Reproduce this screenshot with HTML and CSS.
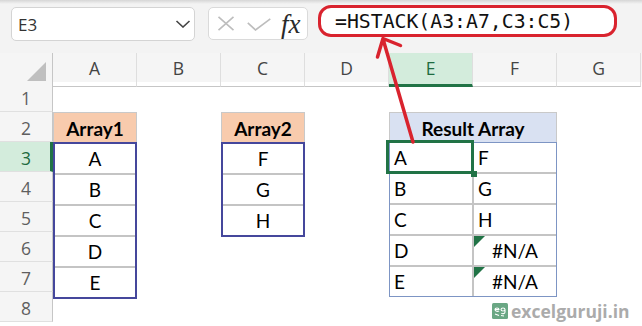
FILE: index.html
```html
<!DOCTYPE html>
<html>
<head>
<meta charset="utf-8">
<link rel="stylesheet" href="styles.css">
</head>
<body>
<div class="app">
  <div class="topbar">
    <div class="namebox">
      <span>E3</span>
      <svg class="chev" width="16" height="8" viewBox="0 0 16 8"><path d="M1.5 1 L8 7 L14.5 1" fill="none" stroke="#444" stroke-width="1.6"/></svg>
    </div>
    <div class="fxbtns">
      <svg width="18" height="15" viewBox="0 0 18 15"><path d="M1.5 0.8 L16.5 14.2 M16.5 0.8 L1.5 14.2" fill="none" stroke="#bdbdbd" stroke-width="1.6"/></svg>
      <svg class="check" width="24" height="13" viewBox="0 0 24 13"><path d="M0.8 4.8 L8.5 12 L23.3 0.8" fill="none" stroke="#bdbdbd" stroke-width="1.6"/></svg>
      <span class="fx">fx</span>
    </div>
    <div class="formula">=HSTACK(A3:A7,C3:C5)</div>
  </div>

  <div class="colheads">
    <div class="corner"><svg width="19" height="19" viewBox="0 0 19 19"><path d="M0 19 L19 0 L19 19 Z" fill="#bfbfbf"/></svg></div>
    <div class="ch">A</div>
    <div class="ch">B</div>
    <div class="ch">C</div>
    <div class="ch">D</div>
    <div class="ch sel">E</div>
    <div class="ch">F</div>
    <div class="ch">G</div>
  </div>

  <div class="body">
    <div class="rowheads">
      <div class="rh">1</div>
      <div class="rh">2</div>
      <div class="rh sel">3</div>
      <div class="rh">4</div>
      <div class="rh">5</div>
      <div class="rh">6</div>
      <div class="rh">7</div>
      <div class="rh">8</div>
    </div>
    <div class="cells">
      <div class="block arr1">
        <div class="thead peach">Array1</div>
        <div class="range">
          <div>A</div><div>B</div><div>C</div><div>D</div><div>E</div>
        </div>
      </div>
      <div class="block arr2">
        <div class="thead peach">Array2</div>
        <div class="range">
          <div>F</div><div>G</div><div>H</div>
        </div>
      </div>
      <div class="block res">
        <div class="thead bluehead">Result Array</div>
        <div class="range rgrid">
          <div>A</div><div>F</div>
          <div>B</div><div>G</div>
          <div>C</div><div>H</div>
          <div>D</div><div class="err">#N/A</div>
          <div>E</div><div class="err">#N/A</div>
        </div>
      </div>
      <div class="selbox"></div>
      <div class="handle"></div>
    </div>
  </div>

  <svg class="arrow" width="642" height="326" viewBox="0 0 642 326">
    <path d="M413 142 L383 39 M377.5 57 L383 38.5 L400.5 45.5" fill="none" stroke="#d9232e" stroke-width="3.5" stroke-linecap="round" stroke-linejoin="round"/>
  </svg>

  <div class="watermark">
    <svg width="16" height="16" viewBox="0 0 16 16">
      <rect x="0" y="0" width="16" height="16" rx="1.5" fill="#6aa784"/>
      <path d="M3 6.5 C3 4.5 7 4.5 7 6.5 L3 6.5 M3 6.5 C3 8.5 6 8.8 7 7.8 M9 6.5 C9 4.5 13 4.5 13 6.5 C13 8.5 9 8.5 9 6.5 M13 6.5 L13 9 C13 11 10 11 9.5 10 M3 11 L7 12.5 M9 12.5 L12 13" fill="none" stroke="#fff" stroke-width="1.1"/>
    </svg>
    <span>excelguruji.in</span>
  </div>
</div>
</body>
</html>
```

FILE: styles.css
```css
* { box-sizing: border-box; }

body {
  margin: 0;
  background: #fff;
  font-family: Lato, "Liberation Sans", sans-serif;
}

.app {
  position: relative;
  width: 642px;
  height: 326px;
  overflow: hidden;
  background: #fff;
}

/* ---------- formula bar ---------- */
.topbar {
  height: 53px;
  display: flex;
  align-items: flex-start;
  padding: 5px 0 0 11px;
  background: linear-gradient(#d6d6d6, #f3f3f3 4px, #f3f3f3);
}

.namebox {
  margin-top: 2px;
  width: 184px;
  height: 34px;
  background: #fff;
  border: 1px solid #d4d4d4;
  border-radius: 5px;
  display: flex;
  align-items: center;
  justify-content: space-between;
  padding: 0 3px 0 6px;
  font-family: "Open Sans", sans-serif;
  font-size: 17px;
  color: #333;
}

.fxbtns {
  margin-top: 2px;
  margin-left: 13px;
  width: 100px;
  height: 33px;
  background: #fff;
  border: 1px solid #dadada;
  border-radius: 5px;
  display: flex;
  align-items: center;
  padding-left: 8px;
}

.check { margin-left: 12px; margin-top: 2px; }

.fx {
  margin-left: 10px;
  font-family: "Liberation Serif", serif;
  font-style: italic;
  font-size: 27px;
  line-height: 30px;
  color: #2a2a2a;
}

.formula {
  margin-left: 10px;
  width: 299px;
  height: 32px;
  border: 3px solid #d9232e;
  border-radius: 13px;
  background: #fff;
  padding-left: 14px;
  font-family: "DejaVu Sans Mono", monospace;
  font-size: 19.8px;
  line-height: 27px;
  color: #111;
}

/* ---------- headers ---------- */
.colheads {
  display: grid;
  grid-template-columns: 53px repeat(7, 84px);
  height: 29px;
  background: #f5f5f5;
}

.corner {
  border-right: 1px solid #c6c6c6;
  border-bottom: 1px solid #c6c6c6;
  display: flex;
  align-items: flex-end;
  justify-content: flex-end;
  padding: 0 6px 5px 0;
}

.ch {
  border-right: 1px solid #dedede;
  border-bottom: 1px solid #c6c6c6;
  text-align: center;
  font-family: "Open Sans", sans-serif;
  font-size: 17.5px;
  line-height: 31px;
  color: #444;
}

.ch.sel {
  background: #d3ecdc;
  color: #1e6b40;
  border-bottom: 3px solid #217346;
}

.body {
  display: flex;
}

.rowheads {
  width: 53px;
  display: flex;
  flex-direction: column;
}

.rh {
  height: 30px;
  background: #f5f5f5;
  border-right: 1px solid #c6c6c6;
  border-bottom: 1px solid #e0e0e0;
  text-align: center;
  font-family: "Open Sans", sans-serif;
  font-size: 17.5px;
  line-height: 32px;
  color: #5f5f5f;
}

.rh.sel {
  background: #d3ecdc;
  color: #1e6b40;
  border-right: 3px solid #217346;
  padding-left: 2px;
}

/* ---------- cells ---------- */
.cells {
  position: relative;
  display: grid;
  grid-template-columns: repeat(7, 84px);
  grid-template-rows: repeat(8, 30px);
  font-size: 19px;
  color: #000;
}

.block {
  display: flex;
  flex-direction: column;
}

.arr1 { grid-column: 1; grid-row: 2 / span 6; }
.arr2 { grid-column: 3; grid-row: 2 / span 4; }
.res  { grid-column: 5 / span 2; grid-row: 2 / span 6; }

.thead {
  height: 30px;
  flex: none;
  font-weight: 700;
  text-align: center;
  line-height: 31px;
  border: 1px solid #c9c9c9;
  border-bottom: none;
}

.peach { background: #f8cbad; }
.bluehead { background: #d9e1f2; }

.range {
  flex: 1;
  display: grid;
  gap: 2px;
  background: #c4c4c4;
  border: 2px solid #45479c;
}

.range > div {
  background: #fff;
  text-align: center;
  line-height: 29px;
}

.rgrid {
  grid-template-columns: 1fr 1fr;
  border: 1px solid #7d95c4;
}

.rgrid > div {
  text-align: left;
  padding-left: 4px;
}

.rgrid > .err {
  position: relative;
  text-align: center;
  padding-left: 0;
}

.err::before {
  content: "";
  position: absolute;
  left: 0;
  top: 0;
  border-top: 11px solid #217346;
  border-right: 11px solid transparent;
}

.selbox {
  position: absolute;
  left: 333px;
  top: 58px;
  width: 88px;
  height: 34px;
  border: 3px solid #217346;
}

.handle {
  position: absolute;
  left: 418px;
  top: 89px;
  width: 6px;
  height: 6px;
  background: #217346;
}

/* ---------- overlays ---------- */
.arrow {
  position: absolute;
  left: 0;
  top: 0;
  pointer-events: none;
}

.watermark {
  position: absolute;
  left: 492px;
  top: 300px;
  display: flex;
  align-items: center;
  gap: 3px;
  font-family: "Open Sans", sans-serif;
  font-weight: 700;
  font-size: 17.5px;
  line-height: 22px;
  color: #ababab;
}
```
